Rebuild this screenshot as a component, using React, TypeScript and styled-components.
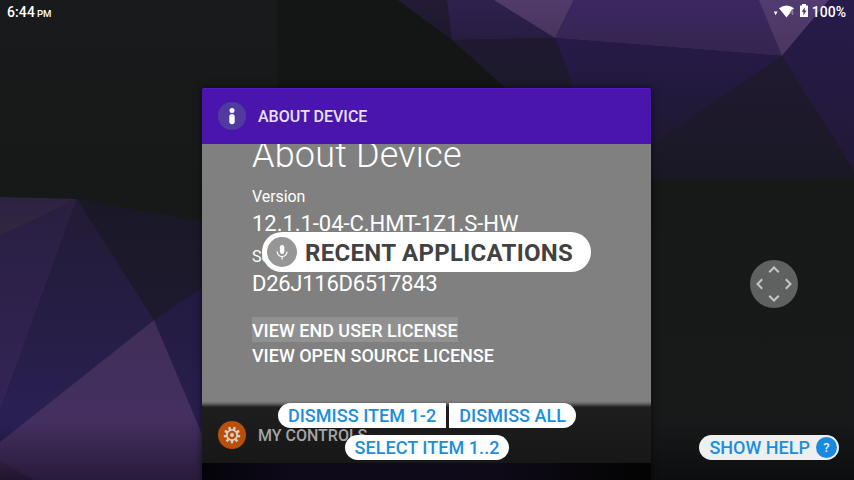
import React from "react";
import styled, { createGlobalStyle } from "styled-components";

const GlobalStyle = createGlobalStyle`
  * { box-sizing: border-box; }
  body { margin: 0; background: #151717; overflow: hidden; }
`;

const Screen = styled.div`
  display: grid;
  width: 854px;
  height: 480px;
  overflow: hidden;
  font-family: Roboto, "Liberation Sans", sans-serif;
  color: #fff;
  & > * { grid-area: 1 / 1; }
`;

const Wallpaper = styled.svg`
  display: block;
  width: 854px;
  height: 480px;
`;

const StatusBar = styled.header`
  position: relative;
  z-index: 1;
  display: flex;
  justify-content: space-between;
  height: 24px;
  padding: 0 8px 0 7px;
  font-size: 14px;
  font-weight: 500;
  line-height: 25px;
`;

const Clock = styled.div`
  letter-spacing: 0.1px;
  small { margin-left: 2px; font-size: 9.6px; letter-spacing: 0; }
`;

const Indicators = styled.div`
  display: flex;
  svg { display: block; margin-right: 2px; }
`;

const CardStack = styled.main`
  position: relative;
  display: flex;
  flex-direction: column;
  width: 449px;
  height: 392px;
  margin: 88px 0 0 202px;
  box-shadow: 0 0 7px 0 rgba(0, 0, 0, 0.6);
  background: linear-gradient(90deg, #040308, #0e0a1a 20%, #0e0a18 65%, #060507 90%, #030303);
`;

const CardHeader = styled.div<{ $kind: "active" | "next" }>`
  display: flex;
  flex: none;
  align-items: center;
  gap: 12px;
  height: 56px;
  padding-left: 16px;
  font-size: 16px;
  font-weight: 500;
  line-height: 20px;
  color: ${(p) => (p.$kind === "active" ? "#e8e1f6" : "#a5a5a5")};
  background: ${(p) => (p.$kind === "active" ? "#4915ac" : "linear-gradient(#1e1e1e, #171717)")};
  box-shadow: inset 0 1px ${(p) => (p.$kind === "active" ? "#561bc9" : "#202020")};
  border-radius: 2px 2px 0 0;
  svg { flex: none; }
  span { padding-top: 1px; }
`;

const CardBody = styled.section`
  display: flex;
  flex: none;
  flex-direction: column;
  align-items: flex-start;
  height: 263px;
  padding-left: 50px;
  overflow: hidden;
  background: linear-gradient(#808080 0, #808080 257px, #6e6e6e 259px, #484848 261px, #222 263px);
`;

const Title = styled.h1`
  margin: -10px 0 0;
  font-size: 36px;
  font-weight: 300;
  line-height: 42px;
  letter-spacing: 0.2px;
`;

const Label = styled.div`
  margin-top: 10px;
  height: 20px;
  font-size: 16px;
  line-height: 22px;
  letter-spacing: -0.08px;
`;

const Value = styled.div<{ $tracking: number }>`
  height: 30px;
  font-size: 22px;
  line-height: 36px;
  letter-spacing: ${(p) => p.$tracking}px;
`;

const License = styled.a<{ $focused?: boolean }>`
  height: 25px;
  font-size: 18px;
  font-weight: 500;
  line-height: 28px;
  background: ${(p) => (p.$focused ? "#919191" : "transparent")};
`;

const Links = styled.nav`
  display: flex;
  flex-direction: column;
  align-items: flex-start;
  margin-top: 21px;
`;

const CommandLayer = styled.div`
  position: relative;
  z-index: 2;
  display: flex;
  flex-direction: column;
  align-items: center;
  gap: 7px;
  padding-top: 403px;
`;

const CommandRow = styled.div`
  display: flex;
  gap: 3px;
`;

const Command = styled.button<{ $shape?: "left" | "right" }>`
  height: 25px;
  padding: 0 10px;
  border: 0;
  border-radius: ${(p) =>
    p.$shape === "left" ? "13px 0 0 13px" : p.$shape === "right" ? "0 13px 13px 0" : "13px"};
  background: #fff;
  color: #1a8fe0;
  font: 500 18px/26px Roboto, "Liberation Sans", sans-serif;
  letter-spacing: 0.05px;
`;

const Heard = styled.div`
  z-index: 3;
  display: flex;
  align-items: center;
  justify-self: start;
  width: 329px;
  height: 40px;
  margin: 232px 0 0 262px;
  padding-left: 5px;
  gap: 8px;
  border-radius: 20px;
  background: #fff;
  color: #424242;
  font-size: 24px;
  font-weight: 700;
  line-height: 28px;
  letter-spacing: 0.3px;
  white-space: nowrap;
  span { padding-top: 2px; }
`;

const SideTools = styled.aside`
  z-index: 2;
  display: flex;
  flex-direction: column;
  justify-self: end;
  align-items: flex-end;
  gap: 127px;
  padding: 260px 15px 0 0;
`;

const Pad = styled.svg`
  display: block;
  margin-right: 41px;
`;

const Help = styled(Command)`
  display: flex;
  align-items: center;
  gap: 6px;
  padding-right: 2px;
  background: #efefef;
  letter-spacing: 0;
`;

const HelpBadge = styled.span`
  width: 21px;
  height: 21px;
  border-radius: 50%;
  background: #188be0;
  color: #eee;
  font-size: 13px;
  line-height: 22px;
  text-align: center;
`;

type Facet = { id: string; points: string; from: string; to: string };

const facets: Facet[] = [
  { id: "a", points: "398,0 448,0 452,40", from: "#231b35", to: "#1c182c" },
  { id: "b", points: "447,0 495,0 555,38 452,40", from: "#30204f", to: "#271d40" },
  { id: "c", points: "494,0 574,0 555,38", from: "#503b6b", to: "#49345f" },
  { id: "d", points: "574,0 760,0 782,56 555,38", from: "#3c2762", to: "#35254e" },
  { id: "e", points: "759,0 829,0 782,56", from: "#513c70", to: "#4b365f" },
  { id: "f", points: "829,0 854,0 854,171 782,56", from: "#271b4b", to: "#211936" },
  { id: "g", points: "452,40 555,38 574,88 506,88", from: "#1e1930", to: "#1e1a2c" },
  { id: "h", points: "555,38 782,56 651,147 590,130", from: "#261a49", to: "#1e192f" },
  { id: "i", points: "782,56 854,171 854,178 640,179 640,152", from: "#201a30", to: "#1a1825" },
  { id: "j", points: "0,197 77,199 0,236", from: "#2c2240", to: "#332643" },
  { id: "k", points: "0,236 77,199 0,411", from: "#291f40", to: "#332458" },
  { id: "l", points: "77,199 154,320 0,442 0,411", from: "#221b34", to: "#2b2057" },
  { id: "m", points: "77,199 204,222 204,286 154,320", from: "#1a1827", to: "#1e1a2e" },
  { id: "n", points: "154,320 204,286 204,440", from: "#231b40", to: "#291f50" },
  { id: "o", points: "154,320 204,439 204,480 0,480 0,442", from: "#402e57", to: "#473068" },
  { id: "p", points: "0,461 34,480 0,480", from: "#402b58", to: "#392653" },
];

const Background = () => (
  <Wallpaper viewBox="0 0 854 480">
    <defs>
      <linearGradient id="night" x2="0" y2="1">
        <stop stopColor="#181a1b" />
        <stop offset="0.4" stopColor="#171919" />
        <stop offset="1" stopColor="#17191a" />
      </linearGradient>
      <linearGradient id="floor" x2="0" y2="1">
        <stop stopColor="#000" stopOpacity="0" />
        <stop offset="1" stopColor="#000" stopOpacity="0.45" />
      </linearGradient>
      {facets.map((f) => (
        <linearGradient key={f.id} id={f.id} x2="0" y2="1">
          <stop stopColor={f.from} />
          <stop offset="1" stopColor={f.to} />
        </linearGradient>
      ))}
    </defs>
    <rect width="854" height="480" fill="url(#night)" />
    <path d="M277 0h121l54 40 54 48H277z" fill="#141616" />
    {facets.map((f) => (
      <polygon key={f.id} points={f.points} fill={`url(#${f.id})`} />
    ))}
    <rect y="420" width="854" height="60" fill="url(#floor)" />
  </Wallpaper>
);

const InfoIcon = () => (
  <svg width="28" height="28" viewBox="0 0 28 28">
    <circle cx="14" cy="14" r="14" fill="#503aa0" />
    <circle cx="14" cy="8.4" r="2.5" fill="#fff" />
    <rect x="11.3" y="12" width="5.4" height="10.2" rx="2.7" fill="#fff" />
  </svg>
);

const teeth = [0, 40, 80, 120, 160, 200, 240, 280, 320];

const GearIcon = () => (
  <svg width="28" height="28" viewBox="0 0 28 28">
    <circle cx="14" cy="14" r="14" fill="#b94f08" />
    <circle cx="14" cy="14" r="5.2" fill="none" stroke="#d7d0cb" strokeWidth="1.8" />
    {teeth.map((t) => (
      <rect key={t} x="12.8" y="5.7" width="2.4" height="3" fill="#d7d0cb" transform={`rotate(${t + 20} 14 14)`} />
    ))}
    <circle cx="14" cy="14" r="2" fill="#d7d0cb" />
  </svg>
);

const MicIcon = () => (
  <svg width="30" height="30" viewBox="0 0 30 30">
    <circle cx="15" cy="15" r="15" fill="#969696" />
    <rect x="12.9" y="8" width="4.4" height="9" rx="2.2" fill="#fff" />
    <path d="M10.2 14.6a4.9 4.9 0 0 0 9.8 0M15.1 19.5v3" fill="none" stroke="#fff" strokeWidth="1.2" />
  </svg>
);

const SignalIcons = () => (
  <svg width="37" height="24" viewBox="0 0 37 24">
    <path d="M0.8 11.5h3.8L2.7 15.3z" fill="#fff" />
    <path d="M6 8.3Q13.5 2.8 21 8.3L13.5 17.6z" fill="#fff" />
    <path d="M19.5 9.2 16.9 13h3.9M19.5 9.2v5.8" fill="none" stroke="#8d7c9f" strokeWidth="1" />
    <path d="M27 5.5h2V4h4v1.5h2V17h-8z" fill="#fff" />
    <path d="M31.8 7.2v3.2h1.8l-3.2 5v-3.6h-1.8z" fill="#513c70" />
  </svg>
);

const App = () => (
  <>
    <GlobalStyle />
    <Screen>
      <Background />
      <StatusBar>
        <Clock>6:44<small>PM</small></Clock>
        <Indicators><SignalIcons />100%</Indicators>
      </StatusBar>
      <CardStack>
        <CardHeader $kind="active"><InfoIcon /><span>ABOUT DEVICE</span></CardHeader>
        <CardBody>
          <Title>About Device</Title>
          <Label>Version</Label>
          <Value $tracking={-0.04}>12.1.1-04-C.HMT-1Z1.S-HW</Value>
          <Label>Serial number</Label>
          <Value $tracking={-0.27}>D26J116D6517843</Value>
          <Links>
            <License $focused>VIEW END USER LICENSE</License>
            <License>VIEW OPEN SOURCE LICENSE</License>
          </Links>
        </CardBody>
        <CardHeader $kind="next"><GearIcon /><span>MY CONTROLS</span></CardHeader>
      </CardStack>
      <CommandLayer>
        <CommandRow>
          <Command $shape="left">DISMISS ITEM 1-2</Command>
          <Command $shape="right">DISMISS ALL</Command>
        </CommandRow>
        <Command>SELECT ITEM 1..2</Command>
      </CommandLayer>
      <Heard><MicIcon /><span>RECENT APPLICATIONS</span></Heard>
      <SideTools>
        <Pad width="48" height="48" viewBox="0 0 48 48">
          <circle cx="24" cy="24" r="24" fill="#5f6060" />
          <path d="M19.2 12.2 24 7.5l4.8 4.7M19.2 35.8l4.8 4.7 4.8-4.7M12.2 19.2 7.5 24l4.7 4.8M35.8 19.2l4.7 4.8-4.7 4.8" fill="none" stroke="#c6c6c6" strokeWidth="2" />
        </Pad>
        <Help>SHOW HELP<HelpBadge>?</HelpBadge></Help>
      </SideTools>
    </Screen>
  </>
);

export default App;
